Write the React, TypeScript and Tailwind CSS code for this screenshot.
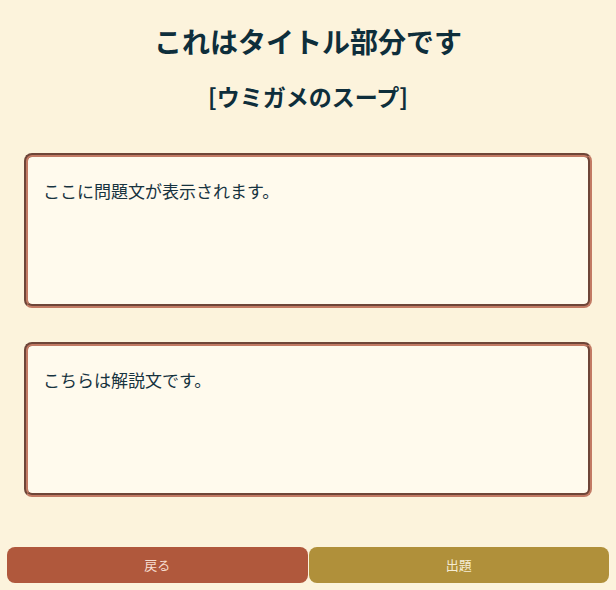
const font = "font-['Noto_Sans_CJK_JP','Noto_Sans',sans-serif]";

function TextBox({ children }: { children: string }) {
  return (
    <div className="h-[155px] rounded-[8px] border-[4px] [border-style:groove] border-[#c27a64] bg-[#fffaed] px-[15px] py-[21px]">
      <p className="text-[17px] leading-[25px] text-[#17333f]">{children}</p>
    </div>
  );
}

export default function App() {
  return (
    <div className={`${font} min-h-[590px] bg-[#fcf3dc] pb-[7px]`}>
      <div className="px-6 pt-5">
        <h1 className="text-center text-[28px] font-bold leading-[42px] text-[#0e2e3b]">
          これはタイトル部分です
        </h1>
        <h2 className="mt-[18px] text-center text-[23px] font-bold leading-[33px] text-[#0e2e3b]">
          [ウミガメのスープ]
        </h2>
        <div className="mt-10 flex flex-col gap-[34px]">
          <TextBox>ここに問題文が表示されます。</TextBox>
          <TextBox>こちらは解説文です。</TextBox>
        </div>
      </div>
      <div className="mt-[50px] flex gap-px px-[7px]">
        <button className="h-9 flex-1 rounded-[8px] bg-[#b0583c] text-[13px] text-[#f6dccf]">
          戻る
        </button>
        <button className="h-9 flex-1 rounded-[8px] bg-[#b0903a] text-[13px] text-[#f5ecd3]">
          出題
        </button>
      </div>
    </div>
  );
}
